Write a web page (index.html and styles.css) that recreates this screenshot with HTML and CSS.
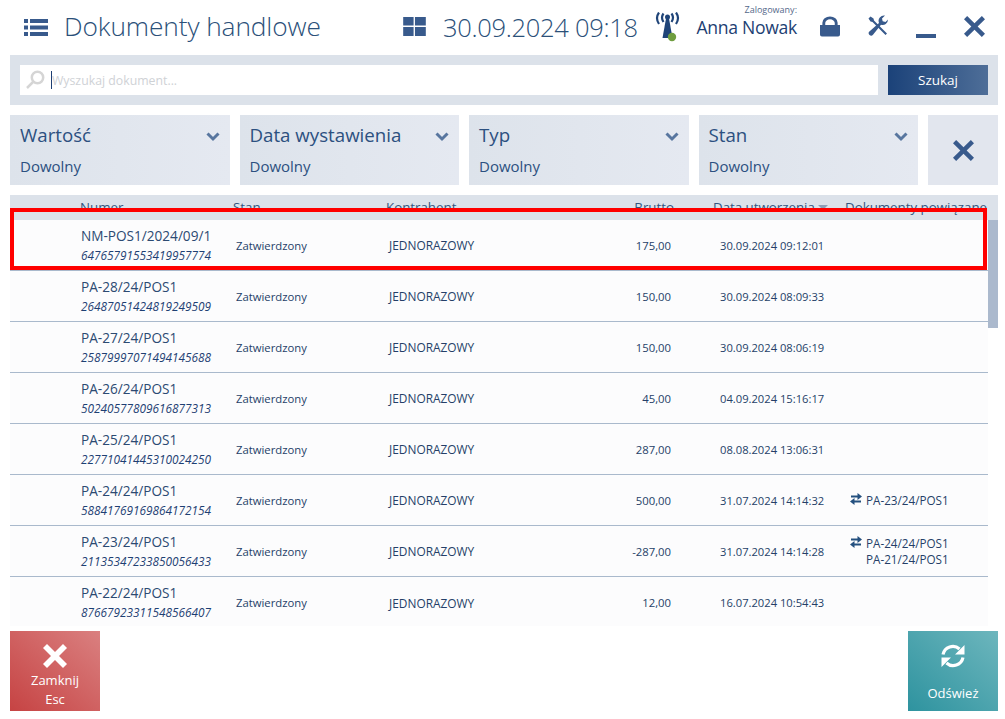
FILE: index.html
```html
<!DOCTYPE html>
<html lang="pl">
<head>
  <meta charset="UTF-8">
  <title>Dokumenty handlowe</title>
  <link rel="stylesheet" href="styles.css">
</head>
<body>
  <div class="app">

    <div class="topbar">
      <svg class="menu-icon" viewBox="0 0 24 18"><path d="M0 1h4v4H0zM6 1h18v4H6zM0 7.500h4v4H0zM6 7.500h18v4H6zM0 14h4v4H0zM6 14h18v4H6z"/></svg>
      <div class="title">Dokumenty handlowe</div>
      <svg class="tiles-icon" viewBox="0 0 25 21"><path d="M0 0h11.500v9.500H0zM13 0h12v9.500H13zM0 11h11.500v10H0zM13 11h12v10H13z"/></svg>
      <div class="clock">30.09.2024 09:18</div>
      <svg class="signal-icon" viewBox="0 0 24 30">
        <path d="M10.500 6.500h3L17 26H7z"/>
        <circle cx="12" cy="5" r="2.500"/>
        <path class="wave" d="M8 1.500Q5 5.500 8 10M16 1.500Q19 5.500 16 10M3.500 .5Q-.5 6 3.500 12M20.500 .5Q24.500 6 20.500 12"/>
        <circle class="dot" cx="16.500" cy="25" r="4.200"/>
      </svg>
      <div class="user">
        <span class="user-label">Zalogowany:</span>
        <span class="user-name">Anna Nowak</span>
      </div>
      <svg class="lock-icon" viewBox="0 0 21 21"><path d="M0 9h2.500V6.500a8 6.500 0 0 1 16 0V9H21v10a2 2 0 0 1-2 2H2a2 2 0 0 1-2-2zM5.500 9h10V6.800a5 3.800 0 0 0-10 0z"/></svg>
      <svg class="tools-icon" viewBox="0 0 22 22">
        <path d="M1.500 3.500L3.500 1.500 6.500 3.500 7 5.500 20 18.500 18.500 20 5.500 7 3.500 6.500z"/>
        <path d="M21 4.500a5.500 5.500 0 0 1-7 5.300L6 19.800a2.400 2.400 0 0 1-3.600-3.400L12 8a5.500 5.500 0 0 1 6-7.500L15 3.500l.7 2.800 2.800.7z"/>
      </svg>
      <div class="min-icon"></div>
      <svg class="close-icon" viewBox="0 0 20 20"><path d="M3 0l7 7 7-7 3 3-7 7 7 7-3 3-7-7-7 7-3-3 7-7-7-7z"/></svg>
    </div>

    <div class="search-bar">
      <div class="search-input">
        <svg class="search-icon" viewBox="0 0 20 20"><circle cx="12.500" cy="7.500" r="5.700"/><path d="M8 12l-6 6"/></svg>
        <span class="caret"></span>
        <span class="placeholder">Wyszukaj dokument...</span>
      </div>
      <button class="search-btn">Szukaj</button>
    </div>

    <div class="filters">
      <div class="filter">
        <div class="filter-name">Wartość</div>
        <div class="filter-value">Dowolny</div>
        <svg class="chevron" viewBox="0 0 14 10"><path d="M1.500 1.500L7 7l5.500-5.500"/></svg>
      </div>
      <div class="filter">
        <div class="filter-name">Data wystawienia</div>
        <div class="filter-value">Dowolny</div>
        <svg class="chevron" viewBox="0 0 14 10"><path d="M1.500 1.500L7 7l5.500-5.500"/></svg>
      </div>
      <div class="filter">
        <div class="filter-name">Typ</div>
        <div class="filter-value">Dowolny</div>
        <svg class="chevron" viewBox="0 0 14 10"><path d="M1.500 1.500L7 7l5.500-5.500"/></svg>
      </div>
      <div class="filter">
        <div class="filter-name">Stan</div>
        <div class="filter-value">Dowolny</div>
        <svg class="chevron" viewBox="0 0 14 10"><path d="M1.500 1.500L7 7l5.500-5.500"/></svg>
      </div>
      <div class="filter-clear">
        <svg class="clear-icon" viewBox="0 0 20 20"><path d="M3 0l7 7 7-7 3 3-7 7 7 7-3 3-7-7-7 7-3-3 7-7-7-7z"/></svg>
      </div>
    </div>

    <div class="table">
      <div class="table-head">
        <span>Numer</span>
        <span>Stan</span>
        <span>Kontrahent</span>
        <span class="right">Brutto</span>
        <span class="head-date">Data utworzenia<i class="sort"></i></span>
        <span>Dokumenty powiązane</span>
      </div>
      <div class="table-body">
        <div class="rows">
          <div class="row">
            <div class="num"><div>NM-POS1/2024/09/1</div><em>64765791553419957774</em></div>
            <div>Zatwierdzony</div><div class="buyer">JEDNORAZOWY</div><div class="right">175,00</div><div class="date">30.09.2024 09:12:01</div><div></div>
          </div>
          <div class="row">
            <div class="num"><div>PA-28/24/POS1</div><em>26487051424819249509</em></div>
            <div>Zatwierdzony</div><div class="buyer">JEDNORAZOWY</div><div class="right">150,00</div><div class="date">30.09.2024 08:09:33</div><div></div>
          </div>
          <div class="row">
            <div class="num"><div>PA-27/24/POS1</div><em>25879997071494145688</em></div>
            <div>Zatwierdzony</div><div class="buyer">JEDNORAZOWY</div><div class="right">150,00</div><div class="date">30.09.2024 08:06:19</div><div></div>
          </div>
          <div class="row">
            <div class="num"><div>PA-26/24/POS1</div><em>50240577809616877313</em></div>
            <div>Zatwierdzony</div><div class="buyer">JEDNORAZOWY</div><div class="right">45,00</div><div class="date">04.09.2024 15:16:17</div><div></div>
          </div>
          <div class="row">
            <div class="num"><div>PA-25/24/POS1</div><em>22771041445310024250</em></div>
            <div>Zatwierdzony</div><div class="buyer">JEDNORAZOWY</div><div class="right">287,00</div><div class="date">08.08.2024 13:06:31</div><div></div>
          </div>
          <div class="row">
            <div class="num"><div>PA-24/24/POS1</div><em>58841769169864172154</em></div>
            <div>Zatwierdzony</div><div class="buyer">JEDNORAZOWY</div><div class="right">500,00</div><div class="date">31.07.2024 14:14:32</div>
            <div class="linked">
              <svg class="link-icon" viewBox="0 0 12 12"><path d="M1 2.500h6.500V0L12 3.500 7.500 7V4.500H1zM11 7.500H4.500V5L0 8.500 4.500 12V9.500H11z"/></svg>
              <div>PA-23/24/POS1</div>
            </div>
          </div>
          <div class="row">
            <div class="num"><div>PA-23/24/POS1</div><em>21135347233850056433</em></div>
            <div>Zatwierdzony</div><div class="buyer">JEDNORAZOWY</div><div class="right">-287,00</div><div class="date">31.07.2024 14:14:28</div>
            <div class="linked">
              <svg class="link-icon" viewBox="0 0 12 12"><path d="M1 2.500h6.500V0L12 3.500 7.500 7V4.500H1zM11 7.500H4.500V5L0 8.500 4.500 12V9.500H11z"/></svg>
              <div>PA-24/24/POS1<br>PA-21/24/POS1</div>
            </div>
          </div>
          <div class="row last">
            <div class="num"><div>PA-22/24/POS1</div><em>87667923311548566407</em></div>
            <div>Zatwierdzony</div><div class="buyer">JEDNORAZOWY</div><div class="right">12,00</div><div class="date">16.07.2024 10:54:43</div><div></div>
          </div>
        </div>
        <div class="scroll-track"><div class="scroll-thumb"></div></div>
      </div>
    </div>

    <div class="actions">
      <button class="action close">
        <svg class="action-icon" viewBox="0 0 24 24"><path d="M4 0l8 8 8-8 4 4-8 8 8 8-4 4-8-8-8 8-4-4 8-8-8-8z"/></svg>
        <span>Zamknij</span>
        <span>Esc</span>
      </button>
      <button class="action refresh">
        <svg class="refresh-icon" viewBox="0 0 26 26">
          <path class="arc" d="M3 11.500A10 10 0 0 1 19.500 6M23 14.500A10 10 0 0 1 6.500 20"/>
          <path d="M24.500 2v9.500H15zM1.500 24v-9.500H11z"/>
        </svg>
        <span>Odśwież</span>
      </button>
    </div>

    <div class="highlight"></div>
  </div>
</body>
</html>
```
FILE: styles.css
```css
* {
  box-sizing: border-box;
}

body {
  margin: 0;
  background: #ffffff;
  color: #1e3f73;
  font-family: "Open Sans", "Noto Sans", sans-serif;
  overflow: hidden;
}

.app {
  position: relative;
  width: 1005px;
  height: 719px;
  padding: 0 7px 0 10px;
}

/* top bar */
.topbar {
  height: 55px;
  display: flex;
  align-items: center;
  color: #2b5079;
}

.topbar svg {
  fill: #385a8c;
  flex: none;
}

.menu-icon {
  width: 24px;
  height: 18px;
  margin-left: 14px;
  margin-top: -2px;
}

.title {
  margin-left: 16px;
  margin-top: -4px;
  font-size: 26.300px;
  font-weight: 300;
  letter-spacing: -0.1px;
  width: 338px;
  white-space: nowrap;
}

.tiles-icon {
  width: 25px;
  height: 19px;
  margin-top: -3px;
}

.clock {
  margin-left: 16px;
  margin-top: -1px;
  font-size: 25.500px;
  font-weight: 300;
  letter-spacing: -0.3px;
  width: 212px;
  white-space: nowrap;
}

.signal-icon {
  width: 25px;
  height: 30px;
  margin-top: -2px;
}

.topbar .signal-icon {
  fill: #1f4478;
}

.topbar .wave {
  fill: none;
  stroke: #1f4478;
  stroke-width: 2.200;
}

.topbar .dot {
  fill: #6f9d3f;
}

.user {
  margin-left: 15px;
  width: 102px;
  display: flex;
  flex-direction: column;
  align-items: flex-end;
  margin-top: -11px;
}

.user-label {
  font-size: 9px;
  line-height: 11px;
  color: #54688a;
}

.user-name {
  font-size: 17.600px;
  line-height: 25px;
  letter-spacing: -0.3px;
  white-space: nowrap;
  color: #1e3f73;
}

.lock-icon {
  width: 20px;
  height: 21px;
  margin-left: 23px;
  margin-top: -2px;
}

.tools-icon {
  width: 22px;
  height: 22px;
  margin-left: 27px;
  margin-top: -4px;
}

.min-icon {
  width: 20px;
  height: 4px;
  margin-left: 27px;
  margin-top: 17px;
  background: #385a8c;
}

.close-icon {
  width: 21px;
  height: 21px;
  margin-left: 28px;
  margin-top: -2px;
}

/* search */
.search-bar {
  height: 50px;
  width: 988px;
  background: #dce2ea;
  padding: 10px;
  display: flex;
  gap: 10px;
}

.search-input {
  flex: 1;
  background: #ffffff;
  display: flex;
  align-items: center;
  padding-left: 5px;
}

.search-icon {
  width: 20px;
  height: 20px;
  fill: none;
  stroke: #d5d5d5;
  stroke-width: 2.500;
}

.caret {
  width: 1px;
  height: 18px;
  margin-left: 6px;
  background: #1e3f73;
}

.placeholder {
  font-size: 12.300px;
  color: #cfd2d6;
}

.search-btn {
  width: 100px;
  border: none;
  background: linear-gradient(to right, #1b4279, #4e6e98);
  color: #ffffff;
  font-family: inherit;
  font-size: 13.500px;
}

/* filters */
.filters {
  width: 988px;
  margin-top: 10px;
  display: flex;
  gap: 10px;
}

.filter {
  position: relative;
  flex: 1;
  height: 70px;
  padding: 6px 10px;
  background: linear-gradient(to right, #dde3eb, #e5e9f1);
  color: #2c5080;
}

.filter-name {
  font-size: 18.700px;
  line-height: 28px;
}

.filter-value {
  margin-top: 6px;
  font-size: 15px;
  line-height: 22px;
}

.chevron {
  position: absolute;
  top: 17px;
  right: 10px;
  width: 14px;
  height: 10px;
  fill: none;
  stroke: #58769f;
  stroke-width: 3;
}

.filter-clear {
  width: 70px;
  height: 70px;
  flex: none;
  background: #e2e6ee;
  display: flex;
  align-items: center;
  justify-content: center;
}

.clear-icon {
  width: 21px;
  height: 21px;
  fill: #385a8c;
}

/* table */
.table {
  width: 988px;
  margin-top: 10px;
}

.table-head {
  display: grid;
  grid-template-columns: 153px 153px 210px 78px 171px 1fr;
  height: 25px;
  padding-left: 70px;
  background: #dce2ea;
  font-size: 13.300px;
  line-height: 25px;
  color: #335680;
  white-space: nowrap;
}

.table-head .right {
  text-align: right;
}

.head-date {
  padding-left: 39px;
}

.sort {
  display: inline-block;
  margin-left: 3px;
  vertical-align: 2px;
  border-left: 5px solid transparent;
  border-right: 5px solid transparent;
  border-top: 5px solid #8d9fb8;
}

.table-body {
  display: flex;
  height: 406px;
}

.rows {
  width: 978px;
  background: #fcfcfd;
}

.row {
  display: grid;
  grid-template-columns: 155px 153px 210px 72px 130px 1fr;
  height: 51px;
  padding-left: 71px;
  align-items: center;
  border-bottom: 1px solid #a9b9cc;
  font-size: 11.300px;
  color: #253f68;
  white-space: nowrap;
}

.row.last {
  border-bottom: none;
}

.row .right {
  text-align: right;
}

.row .buyer {
  font-size: 11.900px;
}

.row .date {
  padding-left: 49px;
  font-size: 11.200px;
}

.num {
  font-size: 13.600px;
  line-height: 20px;
  color: #2c4a72;
}

.num em {
  display: block;
  font-size: 11.800px;
  line-height: 19px;
  color: #1e3f73;
}

.linked {
  display: flex;
  gap: 4px;
  padding-left: 49px;
  font-size: 11.700px;
  line-height: 16.500px;
}

.link-icon {
  width: 12px;
  height: 12px;
  margin-top: 1px;
  fill: #24507f;
  flex: none;
}

.scroll-track {
  width: 10px;
}

.scroll-thumb {
  height: 108px;
  background: #abb9cd;
}

/* bottom buttons */
.actions {
  width: 988px;
  margin-top: 5px;
  display: flex;
  justify-content: space-between;
}

.action {
  width: 90px;
  height: 80px;
  border: none;
  padding: 0;
  color: #ffffff;
  font-family: inherit;
  font-size: 13px;
  line-height: 19px;
  display: flex;
  flex-direction: column;
  align-items: center;
}

.action.close {
  background: linear-gradient(to top right, #c64343, #da8080);
  padding-top: 13px;
}

.action.refresh {
  background: linear-gradient(to top right, #2e939f, #6db6bd);
  padding-top: 12px;
}

.action-icon {
  width: 24px;
  height: 24px;
  margin-bottom: 3px;
  fill: #ffffff;
}

.refresh-icon {
  width: 26px;
  height: 26px;
  margin-bottom: 15px;
  fill: #ffffff;
}

.refresh-icon .arc {
  fill: none;
  stroke: #ffffff;
  stroke-width: 3.200;
}

/* red marker drawn over the first row */
.highlight {
  position: absolute;
  left: 10px;
  top: 208px;
  width: 977px;
  height: 62px;
  border: 4px solid #ff0000;
}
```
